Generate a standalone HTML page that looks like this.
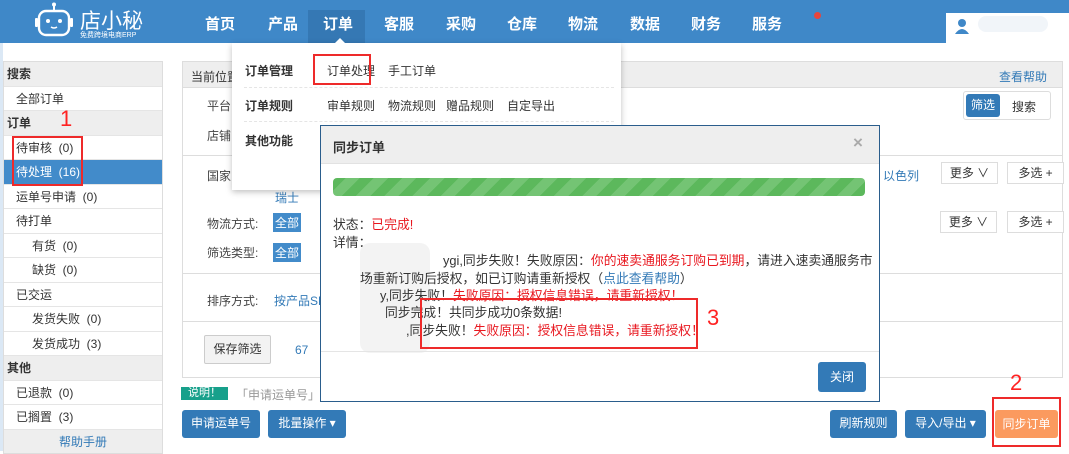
<!DOCTYPE html>
<html><head><meta charset="utf-8">
<style>
*{margin:0;padding:0;box-sizing:border-box}
body{width:1069px;height:451px;overflow:hidden;background:#fff;font-family:"Liberation Sans","Noto Sans CJK SC",sans-serif;font-size:12px;color:#333;position:relative}
.a{position:absolute;white-space:nowrap}
.hdr{left:0;top:0;width:1069px;height:43px;background:#3f88c8}
.nav{color:#fff;font-size:15px;font-weight:bold;top:13px}
.sb{left:3px;width:160px;top:61px;border:1px solid #ddd;border-top:none}
.sb div{height:24.5px;line-height:24px;border-top:1px solid #e5e5e5;padding-left:12px;font-size:12px;white-space:nowrap}
.sb .g{background:#eee;font-weight:bold;padding-left:3px}
.sb .i2{padding-left:28px}
.sb .sel{background:#428bca;color:#fff}
.lbl{font-size:12px;color:#444}
.btn{color:#fff;background:#337ab7;border-radius:3px;text-align:center;font-size:12px;line-height:27px;height:28px}
.wb{border:1px solid #ddd;background:#fff;text-align:center;line-height:20px;height:22px;font-size:12px}
.red{color:#e8171f}
.rb{border:2px solid #ee2a2a}
.md{font-size:12.8px}
</style></head><body>
<div class="a" style="left:0;top:43px;width:3px;height:408px;background:#dbe8f5"></div>
<div class="a hdr"></div>
<svg class="a" style="left:34px;top:2px" width="40" height="36" viewBox="0 0 40 36"><line x1="20" y1="2" x2="20" y2="8" stroke="#fff" stroke-width="2"/><circle cx="20" cy="2.5" r="2" fill="#fff"/><rect x="5" y="9" width="30" height="24" rx="7" fill="none" stroke="#fff" stroke-width="2.4"/><rect x="1" y="16" width="3" height="9" rx="1" fill="#fff"/><rect x="36" y="16" width="3" height="9" rx="1" fill="#fff"/><circle cx="14" cy="19" r="2" fill="#fff"/><circle cx="26" cy="19" r="2" fill="#fff"/><path d="M17 25 q3 2 6 0" stroke="#fff" stroke-width="1.5" fill="none"/></svg>
<div class="a" style="left:80px;top:5px;color:#fff;font-size:21px">店小秘</div>
<div class="a" style="left:80px;top:30px;color:#fff;font-size:7px">免费跨境电商ERP</div>
<div class="a" style="left:308px;top:10px;width:57px;height:33px;background:#3578b4"></div>
<div class="a nav" style="left:205px">首页</div>
<div class="a nav" style="left:268px">产品</div>
<div class="a nav" style="left:323px">订单</div>
<div class="a nav" style="left:384px">客服</div>
<div class="a nav" style="left:446px">采购</div>
<div class="a nav" style="left:507px">仓库</div>
<div class="a nav" style="left:568px">物流</div>
<div class="a nav" style="left:630px">数据</div>
<div class="a nav" style="left:691px">财务</div>
<div class="a nav" style="left:752px">服务</div>
<div class="a" style="left:814px;top:12px;width:7px;height:7px;border-radius:50%;background:#e8453c"></div>
<div class="a" style="left:946px;top:13px;width:123px;height:30px;background:#fff"></div>
<svg class="a" style="left:955px;top:18px" width="14" height="16"><circle cx="7" cy="5" r="4" fill="#3f88c8"/><path d="M0 16 q7-10 14 0z" fill="#3f88c8"/></svg>
<div class="a" style="left:978px;top:16px;width:70px;height:16px;background:#eef3f8;border-radius:8px;opacity:.8"></div>

<div class="a sb">
<div class="g" style="border-top:1px solid #ddd">搜索</div>
<div>全部订单</div>
<div class="g">订单</div>
<div>待审核 &nbsp;(0)</div>
<div class="sel">待处理 &nbsp;(16)</div>
<div>运单号申请 &nbsp;(0)</div>
<div>待打单</div>
<div class="i2">有货 &nbsp;(0)</div>
<div class="i2">缺货 &nbsp;(0)</div>
<div>已交运</div>
<div class="i2">发货失败 &nbsp;(0)</div>
<div class="i2">发货成功 &nbsp;(3)</div>
<div class="g">其他</div>
<div>已退款 &nbsp;(0)</div>
<div>已搁置 &nbsp;(3)</div>
<div style="background:#eee;text-align:center;color:#337ab7;padding:0">帮助手册</div>
</div>
<div class="a red" style="left:60px;top:106px;font-size:22px;color:#f22">1</div>
<div class="a rb" style="left:12px;top:136px;width:71px;height:50px"></div>

<div class="a" style="left:182px;top:61px;width:881px;height:317px;border:1px solid #ddd"></div>
<div class="a" style="left:183px;top:62px;width:879px;height:26px;background:#eee;border-bottom:1px solid #ddd"></div>
<div class="a lbl" style="left:191px;top:68px;color:#333">当前位置</div>
<div class="a" style="left:999px;top:68px;color:#337ab7">查看帮助</div>
<div class="a lbl" style="left:207px;top:97px">平台</div>
<div class="a lbl" style="left:207px;top:127px">店铺</div>
<div class="a" style="left:183px;top:155px;width:879px;height:1px;background:#ddd"></div>
<div class="a lbl" style="left:207px;top:167px">国家</div>
<div class="a" style="left:275px;top:189px;color:#337ab7">瑞士</div>
<div class="a" style="left:963px;top:91px;width:88px;height:29px;border:1px solid #ddd;border-radius:3px"></div>
<div class="a btn" style="left:966px;top:94px;width:34px;height:23px;line-height:23px">筛选</div>
<div class="a" style="left:1012px;top:98px">搜索</div>
<div class="a" style="left:883px;top:167px;color:#337ab7">以色列</div>
<div class="a wb" style="left:941px;top:162px;width:57px">更多 ∨</div>
<div class="a wb" style="left:1007px;top:162px;width:57px">多选 +</div>
<div class="a wb" style="left:940px;top:211px;width:57px">更多 ∨</div>
<div class="a wb" style="left:1007px;top:211px;width:57px">多选 +</div>
<div class="a lbl" style="left:207px;top:215px">物流方式:</div>
<div class="a" style="left:273px;top:213px;background:#428bca;color:#fff;padding:1px 2px">全部</div>
<div class="a lbl" style="left:207px;top:244px">筛选类型:</div>
<div class="a" style="left:273px;top:243px;background:#428bca;color:#fff;padding:1px 2px">全部</div>
<div class="a" style="left:183px;top:273px;width:879px;height:1px;background:#ddd"></div>
<div class="a lbl" style="left:207px;top:292px">排序方式:</div>
<div class="a" style="left:274px;top:292px;color:#337ab7">按产品SK</div>
<div class="a" style="left:183px;top:321px;width:879px;height:1px;background:#ddd"></div>
<div class="a" style="left:204px;top:335px;width:67px;height:29px;border:1px solid #ccc;background:#f3f3f3;line-height:27px;text-align:center;border-radius:2px">保存筛选</div>
<div class="a" style="left:295px;top:343px;color:#337ab7">67</div>
<div class="a" style="left:181px;top:387px;width:47px;height:13px;background:#17a08b;color:#fff;font-size:11px;line-height:13px;text-align:center">说明！</div>
<div class="a" style="left:236px;top:386px;color:#999">「申请运单号」向</div>
<div class="a btn" style="left:182px;top:410px;width:78px">申请运单号</div>
<div class="a btn" style="left:268px;top:410px;width:78px">批量操作 ▾</div>
<div class="a btn" style="left:830px;top:410px;width:67px">刷新规则</div>
<div class="a btn" style="left:905px;top:410px;width:81px">导入/导出 ▾</div>
<div class="a" style="left:995px;top:410px;width:63px;height:28px;background:#fb9a5f;color:#fff;text-align:center;line-height:28px;border-radius:3px">同步订单</div>
<div class="a" style="left:1010px;top:370px;font-size:22px;color:#f22">2</div>
<div class="a rb" style="left:992px;top:397px;width:69px;height:50px"></div>

<div class="a" style="left:232px;top:43px;width:389px;height:147px;background:#fff;box-shadow:0 2px 6px rgba(0,0,0,.25)"></div>
<div class="a" style="left:335px;top:38px;width:0;height:0;border-left:5px solid transparent;border-right:5px solid transparent;border-bottom:5px solid #fff"></div>
<div class="a" style="left:245px;top:62px;font-weight:bold">订单管理</div>
<div class="a" style="left:327px;top:62px">订单处理</div>
<div class="a" style="left:388px;top:62px">手工订单</div>
<div class="a rb" style="left:313px;top:54px;width:58px;height:31px"></div>
<div class="a" style="left:244px;top:87px;width:370px;border-top:1px dashed #e5e5e5"></div>
<div class="a" style="left:245px;top:97px;font-weight:bold">订单规则</div>
<div class="a" style="left:327px;top:97px">审单规则</div>
<div class="a" style="left:388px;top:97px">物流规则</div>
<div class="a" style="left:446px;top:97px">赠品规则</div>
<div class="a" style="left:507px;top:97px">自定导出</div>
<div class="a" style="left:244px;top:121px;width:370px;border-top:1px dashed #e5e5e5"></div>
<div class="a" style="left:245px;top:132px;font-weight:bold">其他功能</div>

<div class="a" style="left:320px;top:125px;width:560px;height:277px;background:#fff;border:1px solid #2a5d8c"></div>
<div class="a" style="left:321px;top:126px;width:558px;height:38px;background:#eee;border-bottom:1px solid #e2e2e2"></div>
<div class="a" style="left:333px;top:137px;font-weight:bold;font-size:13px">同步订单</div>
<div class="a" style="left:853px;top:133px;color:#aaa;font-size:17px;font-weight:bold">×</div>
<div class="a" style="left:333px;top:178px;width:532px;height:18px;border-radius:4px;background:repeating-linear-gradient(-45deg,#5cb85c 0 10px,#74c474 10px 20px)"></div>
<div class="a md" style="left:333px;top:214px">状态：<span class="red">已完成!</span></div>
<div class="a md" style="left:333px;top:232px">详情：</div>
<div class="a" style="left:360px;top:243px;width:70px;height:110px;background:#f0f0f0;border-radius:10px;opacity:.8"></div>
<div class="a md" style="left:443px;top:250px">ygi,同步失败！失败原因：<span class="red">你的速卖通服务订购已到期</span>，请进入速卖通服务市</div>
<div class="a md" style="left:360px;top:268px">场重新订购后授权，如已订购请重新授权（<span style="color:#337ab7">点此查看帮助</span>）</div>
<div class="a md" style="left:380px;top:285px">y,同步失败！<span class="red">失败原因：授权信息错误，请重新授权！</span></div>
<div class="a md" style="left:385px;top:302px">同步完成！共同步成功0条数据!</div>
<div class="a md" style="left:406px;top:320px">,同步失败！<span class="red">失败原因：授权信息错误，请重新授权！</span></div>
<div class="a rb" style="left:420px;top:298px;width:278px;height:51px"></div>
<div class="a" style="left:707px;top:305px;font-size:22px;color:#f22">3</div>
<div class="a" style="left:321px;top:351px;width:558px;height:1px;background:#e5e5e5"></div>
<div class="a btn" style="left:818px;top:362px;width:48px;height:30px;line-height:30px">关闭</div>
</body></html>
